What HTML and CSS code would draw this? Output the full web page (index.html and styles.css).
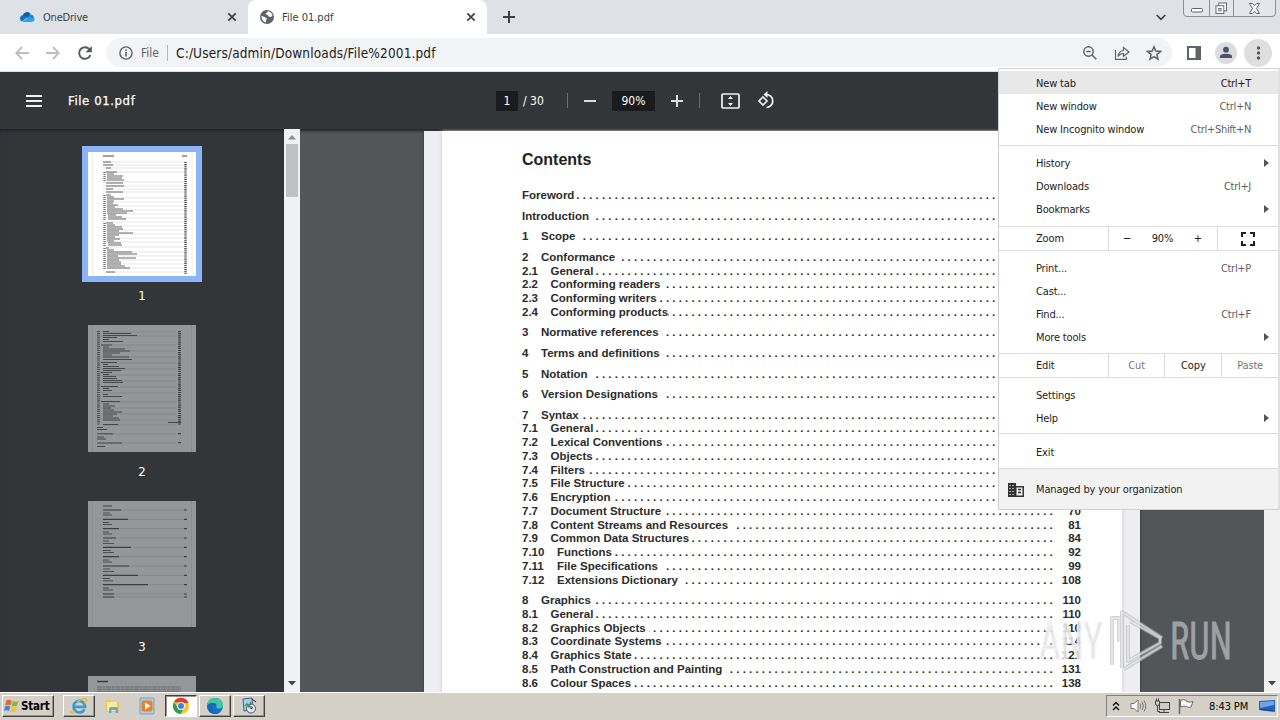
FILE: index.html
```html
<!DOCTYPE html>
<html lang="en">
<head>
<meta charset="utf-8">
<title>File 01.pdf</title>
<link rel="stylesheet" href="styles.css">
</head>
<body>
<div class="screen">
  <header class="tabs">
    <div class="tab tab-idle">
      <svg width="16" height="16" viewBox="0 0 16 16"><path d="M3.600 6.800A4.400 4.400 0 0 1 11.600 5l-3 4z" fill="#0a5cad"/><path d="M1 9.800A3.300 3.300 0 0 1 4 6.200q2 0 4.400 2L3 12.400Q1 12 1 9.800z" fill="#1173c7"/><path d="M8 8.500Q10 4.800 12.500 5.800A3.400 3.400 0 0 1 15 8.800l-3 1.500z" fill="#1583da"/><path d="M3 12.900L9.500 8.200 15.200 9q1.200 3.200-2 4H4.500z" fill="#2aa9ea"/></svg>
      <span class="tab-title">OneDrive</span>
      <svg class="x" width="10" height="10" viewBox="0 0 10 10"><path d="M1.300 1.300l7.400 7.400M8.700 1.300L1.300 8.700"/></svg>
    </div>
    <div class="tab tab-active">
      <svg width="16" height="16" viewBox="0 0 16 16"><circle cx="8" cy="8" r="7" fill="#5f6368"/><path d="M8.500 2.200Q13 3 13.500 6.500L12 8 9.500 7.500 9 6 7 5.500 6.800 4 8.500 3.500zM2.400 6.700L6 8.200 8 9.500 7 11v2.600Q2.600 12.500 2.400 6.700z" fill="#fff"/></svg>
      <span class="tab-title">File 01.pdf</span>
      <svg class="x" width="10" height="10" viewBox="0 0 10 10"><path d="M1.300 1.300l7.400 7.400M8.700 1.300L1.300 8.700"/></svg>
    </div>
    <svg class="plus" width="12" height="12" viewBox="0 0 12 12"><path d="M6 0v12M0 6h12" stroke="#3c4043" stroke-width="2"/></svg>
    <svg class="chev" width="10" height="7" viewBox="0 0 10 7"><path d="M.7 1L5 5.300 9.300 1" fill="none" stroke="#3c4043" stroke-width="1.700"/></svg>
    <div class="winbtns">
      <svg width="25" height="17" viewBox="0 0 25 17"><rect x="7.500" y="8.500" width="11" height="3.500" rx="1" fill="#fff" stroke="#5d626b"/></svg>
      <svg class="mid" width="25" height="17" viewBox="0 0 25 17"><rect x="9.500" y="2.500" width="8.500" height="8.500" fill="#fff" stroke="#5d626b"/><rect x="6.500" y="5.500" width="8.500" height="8.500" fill="#fff" stroke="#5d626b"/><rect x="9.500" y="8.500" width="2.500" height="2.500" fill="none" stroke="#5d626b"/></svg>
      <svg width="42" height="17" viewBox="0 0 42 17"><path d="M15.500 3.500h3l2 2.300 2-2.300h3l-3 5 3 5h-3l-2-2.300-2 2.300h-3l3-5z" fill="#fff" stroke="#5d626b"/></svg>
    </div>
  </header>

  <div class="toolbar">
    <svg class="nav" width="14" height="14" viewBox="0 0 14 14"><path d="M7 1L1.200 7 7 13M1.200 7H14" fill="none" stroke="#bcbec1" stroke-width="1.800"/></svg>
    <svg class="nav" width="14" height="14" viewBox="0 0 14 14"><path d="M7 1l5.800 6L7 13M12.800 7H0" fill="none" stroke="#bcbec1" stroke-width="1.800"/></svg>
    <svg class="nav" width="16" height="16" viewBox="0 0 16 16"><path d="M13.400 10A5.800 5.800 0 1 1 12.200 4" fill="none" stroke="#55585c" stroke-width="2"/><path d="M14.800 1v6.300H8.500z" fill="#55585c"/></svg>
    <div class="omni">
      <svg width="14" height="14" viewBox="0 0 14 14"><circle cx="7" cy="7" r="6.100" fill="none" stroke="#5f6368" stroke-width="1.400"/><path d="M7 6v4.500M7 3.200v1.600" stroke="#5f6368" stroke-width="1.600"/></svg>
      <span class="scheme">File</span><i class="bar"></i><span class="url">C:/Users/admin/Downloads/File%2001.pdf</span>
      <svg class="o1" width="16" height="16" viewBox="0 0 16 16"><circle cx="6.500" cy="6.500" r="4.700" fill="none" stroke="#5f6368" stroke-width="1.500"/><path d="M10 10l4.300 4.300M4.300 6.500h4.400" stroke="#5f6368" stroke-width="1.500"/></svg>
      <svg class="o2" width="16" height="16" viewBox="0 0 16 16"><path d="M1.500 5v9.300h10.800v-2.500M4 11.500Q5 5.500 9.500 5.500V2.500L15 7l-5.500 4.300V8.500Q6 8.500 4 11.500z" fill="none" stroke="#5f6368" stroke-width="1.200"/></svg>
      <svg class="o3" width="16" height="16" viewBox="0 0 16 16"><path d="M8 1.800l1.800 4.300 4.700.4-3.600 3.100 1.100 4.600L8 11.700l-4 2.500 1.100-4.600L1.500 6.500l4.700-.4z" fill="none" stroke="#5f6368" stroke-width="1.500"/></svg>
    </div>
    <svg class="panel" width="14" height="14" viewBox="0 0 14 14"><path d="M0 0h14v14H0zM2 2v10h6.500V2z" fill="#5f6368" fill-rule="evenodd"/></svg>
    <svg class="avatar" width="22" height="22" viewBox="0 0 22 22"><circle cx="11" cy="11" r="11" fill="#dadce0"/><circle cx="11" cy="7.700" r="2.900" fill="#47546d"/><path d="M5 16v-1.500Q5 11.700 11 11.700t6 2.800V16z" fill="#47546d"/></svg>
    <svg class="more" width="28" height="28" viewBox="0 0 28 28"><circle cx="14" cy="14" r="14" fill="#dfdfe0"/><g fill="#55585c"><circle cx="14.500" cy="9" r="1.700"/><circle cx="14.500" cy="14" r="1.700"/><circle cx="14.500" cy="19" r="1.700"/></g></svg>
  </div>

  <div class="pdfbar">
    <svg class="burger" width="16" height="12" viewBox="0 0 16 12"><path d="M0 1h16M0 6h16M0 11h16" stroke="#f1f1f1" stroke-width="2"/></svg>
    <span class="doc">File 01.pdf</span>
    <div class="pdfctl">
      <span class="box pg">1</span><span class="of">/ 30</span><i class="div d1"></i>
      <svg class="minus" width="12" height="12" viewBox="0 0 12 12"><path d="M0 6h12" stroke="#dcdddd" stroke-width="2"/></svg>
      <span class="box zm">90%</span>
      <svg class="add" width="12" height="12" viewBox="0 0 12 12"><path d="M0 6h12M6 0v12" stroke="#dcdddd" stroke-width="2"/></svg>
      <i class="div d2"></i>
      <svg class="fit" width="19" height="16" viewBox="0 0 19 16"><rect x="1" y="1" width="17" height="14" rx="1" fill="none" stroke="#f1f1f1" stroke-width="1.700"/><path d="M9.500 3l2.500 3H7zM9.500 13L7 10h5z" fill="#f1f1f1"/></svg>
      <svg class="rot" width="19" height="19" viewBox="0 0 19 19"><path d="M6 6l4 4-4 4-4-4z" fill="none" stroke="#f1f1f1" stroke-width="1.700"/><path d="M9 3.500A6.500 6.500 0 1 1 9.500 16.500" fill="none" stroke="#f1f1f1" stroke-width="1.700"/><path d="M10.500 0v7L6.500 3.500z" fill="#f1f1f1"/></svg>
    </div>
  </div>

  <main class="view">
    <aside class="thumbs">
      <div class="thumb sel">
        <svg width="108" height="124" viewBox="0 0 108 124"><rect width="108" height="124" fill="#fff"/><path d="M4.500 0v124M104 0v124" stroke="#f3ead2" stroke-width=".8"/>
          <path d="M15 4h11M94 4h5" stroke="#444" stroke-width="1.200"/>
          <path d="M15 10h84M15 13h84M15 16h84M15 20h84M15 30h84M15 34h84M15 37h84M15 40h84M15 46h84M15 50h84M15 54h84M15 58h84M15 62h84M15 66h84M15 70h84M15 74h84M15 78h84M15 82h84M15 86h84M15 90h84M15 95h84M15 100h84M15 104h84M15 108h84M15 112h84M15 116h84M15 120h84" stroke="#d3d3d3" stroke-width=".6"/>
          <path d="M15 10h8M15 13h10M18 16h5M18 20h11M19 22h7M19 24h16M19 26h15M19 28h17M18 31h17M18 34h18M18 37h7M18 40h17M18 43h5M19 45h7M19 47h17M19 49h7M19 51h6M19 53h11M19 55h8M19 57h16M19 59h26M19 61h20M20 63h8M20 65h14M20 67h18M18 71h7M19 73h8M19 75h15M19 77h16M19 79h12M19 81h26M19 83h12M19 85h8M19 87h13M19 89h7M20 91h13M20 93h14M18 96h3M19 98h7M19 100h25M19 102h30M19 104h11M19 106h29M19 108h12M19 110h14M19 112h14M19 114h18M19 116h23M18 120h9" stroke="#666" stroke-width="1"/>
          <path d="M97.500 10v112" stroke="#444" stroke-width="2.400" stroke-dasharray="1.100 1"/><path d="M16.500 20v9M16.500 43v26M16.500 71v23M16.500 96v22" stroke="#777" stroke-width="2.400" stroke-dasharray="1.100 .9"/></svg>
      </div>
      <span class="num">1</span>
      <div class="thumb dim t2">
        <svg width="108" height="127" viewBox="0 0 108 127"><rect width="108" height="127" fill="#94979a"/><path d="M4.500 0v127M103.500 0v127" stroke="#8a8d90" stroke-width="1"/>
          <path d="M14 7h74M14 11h74M14 20h74M14 26h74M14 32h74M14 38h74M14 44h74M14 50h74M14 56h74M14 62h74M14 68h74M14 77h74M14 83h74M14 89h74M14 95h74M14 100h74M14 109h74M14 118h74" stroke="#7f8285" stroke-width=".7"/>
          <path d="M15 6.500h6M15 8.500h28M15 10.500h34M15 12.500h14M15 14.500h6M15 16.500h20M13 20h11M15 22h6M15 24h22M15 26h27M15 28h17M15 30h9M15 32h26M15 34.500h29M13 37.500h16M15 39.500h5M15 41.500h16M15 43.500h22M15 45.500h18M13 47.500h11M15 49.500h6M15 51.500h13M15 53.500h14M15 55.500h19M15 57.500h20M13 61.500h17M15 63.500h6M15 65.500h9M15 69.500h5M15 71.500h19M13 76.500h19M15 79h6M15 81h12M15 83h8M15 85h11M15 87h19M15 89h14M15 91h10M15 93h16M15 95h17M80 97.500h13M15 99.500h15M9 102.500h6M9 104.500h10M9 108.800h16M9 112h7M9 114h9M9 118h25M9 121.500h8" stroke="#45484b" stroke-width="1"/>
          <path d="M91.500 6v94M91.500 108v2M91.500 117v2" stroke="#3f4245" stroke-width="3" stroke-dasharray="1.200 .9"/><path d="M10.500 6v94" stroke="#505356" stroke-width="3" stroke-dasharray="1.200 .9"/></svg>
      </div>
      <span class="num">2</span>
      <div class="thumb dim t3">
        <svg width="108" height="126" viewBox="0 0 108 126"><rect width="108" height="126" fill="#94979a"/><path d="M4.500 0v126M103.500 0v126" stroke="#8a8d90" stroke-width="1"/>
          <path d="M15 9h82M15 18.300h82M15 27.600h82M15 37h82M15 46.300h82M15 55.700h82M15 65h82M15 74.400h82M15 83.700h82M15 93h82M15 96h82" stroke="#7f8285" stroke-width=".7"/>
          <path d="M15 5h9M15 9h18M15 18.300h25M15 27.600h16M15 37h13M15 46.300h28M15 55.700h16M15 65h26M15 74.400h35M15 83.700h45M15 93h11M15 96h11M96 9h3M96 18.300h3M96 27.600h3M96 37h3M96 46.300h3M96 55.700h3M96 65h3M96 74.400h3M96 83.700h3M96 93h3M96 96h3" stroke="#3d4043" stroke-width="1.200"/>
          <path d="M15 12h7M15 14h9M15 21.500h6M15 23.500h9M15 31h6M15 33h9M15 40h6M15 42.500h11M15 49.500h8M15 51.500h11M15 59h6M15 61h9M15 68h7M15 70.500h11M15 77.500h7M15 79.800h10M15 87h6M15 89h10" stroke="#4c4f52" stroke-width="1"/></svg>
      </div>
      <span class="num">3</span>
      <div class="thumb dim t4">
        <svg width="108" height="127" viewBox="0 0 108 127"><rect width="108" height="127" fill="#94979a"/><path d="M9 5.500h11" stroke="#3a3d40" stroke-width="1.500"/><path d="M9 11h84M9 13.200h84M9 15.400h84" stroke="#66696c" stroke-width="1" stroke-dasharray="5 .6 3 .6"/></svg>
      </div>
    </aside>
    <div class="sb">
      <svg width="16" height="16" viewBox="0 0 16 16"><path d="M8 6l4 4.500H4z" fill="#8c8c8c"/></svg>
      <div class="sbthumb"></div>
      <svg width="16" height="16" viewBox="0 0 16 16"><path d="M4 5h8l-4 4.500z" fill="#444"/></svg>
    </div>

    <section class="viewer">
      <article class="page">
        <div class="paper">
        <h1>Contents</h1>
        <div class="toc">
<p class="g"><b>Foreword</b><i></i><u>vi</u></p>
<p class="g"><b>Introduction&nbsp;</b><i></i><u>vii</u></p>
<p class="g"><s>1</s><b>Scope&nbsp;</b><i></i><u>1</u></p>
<p class="g"><s>2</s><b>Conformance&nbsp;</b><i></i><u>1</u></p>
<p><s class="m">2.1</s><b>General</b><i></i><u>1</u></p>
<p><s class="m">2.2</s><b>Conforming readers&nbsp;</b><i></i><u>1</u></p>
<p><s class="m">2.3</s><b>Conforming writers</b><i></i><u>1</u></p>
<p><s class="m">2.4</s><b>Conforming products</b><i></i><u>2</u></p>
<p class="g"><s>3</s><b>Normative references&nbsp;</b><i></i><u>2</u></p>
<p class="g"><s>4</s><b>Terms and definitions&nbsp;</b><i></i><u>6</u></p>
<p class="g"><s>5</s><b>Notation&nbsp;&nbsp;</b><i></i><u>10</u></p>
<p class="g"><s>6</s><b>Version Designations&nbsp;&nbsp;</b><i></i><u>10</u></p>
<p class="g"><s>7</s><b>Syntax</b><i></i><u>11</u></p>
<p><s class="m">7.1</s><b>General</b><i></i><u>11</u></p>
<p><s class="m">7.2</s><b>Lexical Conventions</b><i></i><u>11</u></p>
<p><s class="m">7.3</s><b>Objects</b><i></i><u>13</u></p>
<p><s class="m">7.4</s><b>Filters&nbsp;</b><i></i><u>22</u></p>
<p><s class="m">7.5</s><b>File Structure</b><i></i><u>38</u></p>
<p><s class="m">7.6</s><b>Encryption</b><i></i><u>55</u></p>
<p><s class="m">7.7</s><b>Document Structure&nbsp;</b><i></i><u>70</u></p>
<p><s class="m">7.8</s><b>Content Streams and Resources&nbsp;&nbsp;</b><i></i><u>81</u></p>
<p><s class="m">7.9</s><b>Common Data Structures</b><i></i><u>84</u></p>
<p><s class="l">7.10</s><b>Functions</b><i></i><u>92</u></p>
<p><s class="l">7.11</s><b>File Specifications&nbsp;&nbsp;</b><i></i><u>99</u></p>
<p><s class="l">7.12</s><b>Extensions Dictionary&nbsp;&nbsp;</b><i></i><u>108</u></p>
<p class="g"><s>8</s><b>Graphics&nbsp;</b><i></i><u>110</u></p>
<p><s class="m">8.1</s><b>General</b><i></i><u>110</u></p>
<p><s class="m">8.2</s><b>Graphics Objects&nbsp;</b><i></i><u>110</u></p>
<p><s class="m">8.3</s><b>Coordinate Systems</b><i></i><u>114</u></p>
<p><s class="m">8.4</s><b>Graphics State</b><i></i><u>121</u></p>
<p><s class="m">8.5</s><b>Path Construction and Painting&nbsp;</b><i></i><u>131</u></p>
<p><s class="m">8.6</s><b>Colour Spaces</b><i></i><u>138</u></p>
        </div>
        </div>
      </article>
    </section>
    <div class="sb right"><svg width="16" height="16" viewBox="0 0 16 16"><path d="M4 5h8l-4 4.500z" fill="#444"/></svg></div>
  </main>

  <footer class="task">
    <div class="tb start"><svg width="16" height="16" viewBox="0 0 16 16"><path d="M2.500 2.500Q5 1 7.500 2.500L6.500 7.300Q4 6 1.300 7.500z" fill="#e8642c"/><path d="M8.500 3Q11.500 4.500 14.500 2.800L13.300 7.500Q10.500 9 7.500 7.700z" fill="#8cb83a"/><path d="M1 8.500Q3.500 7 6.200 8.400L5 13Q2.500 11.500 0 13z" fill="#3f86cc"/><path d="M7.300 8.900Q10 10 13 8.700L11.800 13Q9 14.800 6.200 13.500z" fill="#f4c22b"/></svg>Start</div>
    <div class="tb app a1"><svg width="18" height="18" viewBox="0 0 18 18"><path d="M14.500 12.300A5.800 5.800 0 1 1 15 8.500v1.300H4" fill="none" stroke="#3a9ad9" stroke-width="2.700"/><path d="M1 14Q-.5 17 5 14.500M7 5Q16-1 16.500 2.500 16.500 4 14.500 6" fill="none" stroke="#e6b93a" stroke-width="1.500"/></svg></div>
    <div class="app flat"><svg width="18" height="18" viewBox="0 0 18 18"><path d="M2 3h5l1 2h7v10H2z" fill="#e9c65c"/><path d="M3 5h10v9H3z" fill="#fae9a4"/><path d="M5 16v-4q0-2 2-2h5q2 0 2 2v4h-2.500v-3h-4v3z" fill="#65aeca"/></svg></div>
    <div class="app flat"><svg width="18" height="18" viewBox="0 0 18 18"><rect x="2" y="1" width="14" height="16" rx="1" fill="#a9cdea" stroke="#6ea4cf"/><rect x="3.500" y="3.500" width="11" height="11" rx="2" fill="#f08023"/><path d="M7 5.500v7L12.500 9z" fill="#fff"/></svg></div>
    <div class="tb app on"><svg width="18" height="18" viewBox="0 0 18 18"><circle cx="9" cy="9" r="8" fill="#f8c51c"/><path d="M2 5A8 8 0 0 1 16.500 6H9z" fill="#e33b2e"/><path d="M2 5A8 8 0 0 0 8.500 17L12 11H6z" fill="#2da04e"/><circle cx="9" cy="9" r="3.900" fill="#fff"/><circle cx="9" cy="9" r="3" fill="#3b7fe8"/></svg></div>
    <div class="tb app"><svg width="18" height="18" viewBox="0 0 18 18"><circle cx="9" cy="9" r="8" fill="#1473c4"/><path d="M1.200 8Q2 1 9 1t8 7q0 3.500-4 3.500-3 0-2.500-1.500Q11 6 6.500 6 3 6 1.200 8z" fill="#42c8a0"/><path d="M6.500 8Q4 12 8 15q3 2 6.500 0Q12 17 9 17 1 16 1.200 9 3 6 7.500 6 10 6 10.800 8z" fill="#1b66b4"/></svg></div>
    <div class="tb app"><svg width="18" height="18" viewBox="0 0 18 18"><path d="M3 2l9-1 1 12-9 1z" fill="#9ed2ee" stroke="#558"/><circle cx="11" cy="11.500" r="4.500" fill="#dce8f5" stroke="#46507a"/><path d="M5 9l2-2 2 3 2-5" fill="none" stroke="#3a9d48" stroke-width="1.500"/><path d="M11 9v3l2-1.500M12 2l4 3" fill="none" stroke="#223"/></svg></div>
    <div class="tray">
      <svg width="8" height="10" viewBox="0 0 8 10"><path d="M1 4.500L4 1.500l3 3M1 9l3-3 3 3" fill="none" stroke="#111" stroke-width="1.500"/></svg>
      <svg class="s2" width="17" height="16" viewBox="0 0 17 16"><path d="M1 5.500h3L8 2v12L4 10.500H1z" fill="#fff" stroke="#777"/><path d="M10 5.500q1.800 2.500 0 5M12 4q3 4 0 8M14 2.500q3.500 5.500 0 11" fill="none" stroke="#777"/></svg>
      <svg class="s3" width="16" height="16" viewBox="0 0 16 16"><rect x="5.500" y="4.500" width="10" height="7" fill="#ccc" stroke="#444"/><path d="M5 14.500h10M10 12v2" stroke="#444"/><path d="M1.500 3h4v3q0 1.500-2 1.500t-2-1.500zM2.500 3V.5M4.500 3V.5M3.500 7.500v6H6" fill="none" stroke="#444"/></svg>
      <svg class="s4" width="17" height="16" viewBox="0 0 17 16"><path d="M1.500 1v15" stroke="#666" stroke-width="1.500"/><path d="M2.500 2.500q3-2 6 0v1q3 1.500 6.500 0L13 9q-2.500 1-4.500-.5-3-1-6 .5z" fill="#fff" stroke="#666"/></svg>
      <time>8:43 PM</time>
      <svg class="s5" width="16" height="12" viewBox="0 0 16 12"><path d="M0 1l16-1v12L0 10z" fill="#2264bd"/><path d="M1 2l14-1v4L1 8z" fill="#6da6e8"/><path d="M2 9.500l12 1" stroke="#153f80"/></svg>
    </div>
  </footer>

  <nav class="menu">
    <div class="grp first">
      <div class="mi hot"><span>New tab</span><kbd>Ctrl+T</kbd></div>
      <div class="mi"><span>New window</span><kbd>Ctrl+N</kbd></div>
      <div class="mi"><span>New Incognito window</span><kbd>Ctrl+Shift+N</kbd></div>
    </div>
    <div class="grp hist">
      <div class="mi"><span>History</span><em></em></div>
      <div class="mi"><span>Downloads</span><kbd>Ctrl+J</kbd></div>
      <div class="mi"><span>Bookmarks</span><em></em></div>
    </div>
    <div class="split zoom"><span class="lab">Zoom</span><div class="cell zc"><span>−</span><span class="pct">90%</span><span>+</span></div><div class="cell fs"><svg width="14" height="14" viewBox="0 0 14 14"><path d="M1 5V1h4M9 1h4v4M13 9v4H9M5 13H1V9" fill="none" stroke="#222" stroke-width="2"/></svg></div></div>
    <div class="grp print">
      <div class="mi"><span>Print...</span><kbd>Ctrl+P</kbd></div>
      <div class="mi"><span>Cast...</span></div>
      <div class="mi"><span>Find...</span><kbd>Ctrl+F</kbd></div>
      <div class="mi"><span>More tools</span><em></em></div>
    </div>
    <div class="split"><span class="lab">Edit</span><div class="cell ed off">Cut</div><div class="cell ed">Copy</div><div class="cell ed off">Paste</div></div>
    <div class="grp set">
      <div class="mi"><span>Settings</span></div>
      <div class="mi"><span>Help</span><em></em></div>
    </div>
    <div class="grp exit"><div class="mi"><span>Exit</span></div></div>
    <div class="managed"><svg width="16" height="14" viewBox="0 0 16 14"><path d="M0 0h8v3h8v11H0z" fill="#333"/><path d="M1.500 2.500h5M1.500 5.500h5M1.500 8.500h5M1.500 11.500h5" stroke="#f2f2f2" stroke-width="1.200" stroke-dasharray="1.200 1.700"/><path d="M8.500 4.500h6v8h-6z" fill="#f2f2f2"/><path d="M10 6.500h3M10 9.500h3" stroke="#333" stroke-width="1.500"/></svg><span>Managed by your organization</span></div>
  </nav>

  <svg class="mark" width="204" height="66" viewBox="0 0 204 66">
    <g font-family="Roboto, sans-serif" font-size="51" font-weight="400" opacity=".9"><text x="1" y="51" textLength="64" lengthAdjust="spacingAndGlyphs" fill="#e3e3e5" stroke="#f4f4f5" stroke-width="1.200">ANY</text><text x="132" y="51" textLength="62" lengthAdjust="spacingAndGlyphs" fill="#a7a9ab" stroke="#a7a9ab" stroke-width=".8">RUN</text></g>
    <path d="M74 57V10h7v24M84 60V4l40 26M90 17v36l32-18v-5L92 13M86 61l38-23" fill="none" stroke="#b4b6b9" stroke-width="4" stroke-linejoin="round" opacity=".6"/>
    <path d="M74 57V10h7v24M84 60V4l40 26M90 17v36l32-18v-5L92 13M86 61l38-23" fill="none" stroke="#f2f2f4" stroke-width="2" stroke-linejoin="round" opacity=".6"/>
  </svg>
</div>
</body>
</html>
```

FILE: styles.css
```css
* { box-sizing: border-box; }
body { margin: 0; overflow: hidden; font-family: "DejaVu Sans Condensed", "DejaVu Sans", sans-serif; font-stretch: condensed; font-size: 11px; color: #222; }
svg { display: block; flex: none; }
.screen { position: relative; width: 1280px; height: 720px; display: flex; flex-direction: column; overflow: hidden; }

.tabs { height: 34px; background: #dee1e6; display: flex; align-items: flex-start; flex: none; }
.tab { height: 34px; display: flex; align-items: center; }
.tab-idle { width: 248px; padding: 0 11px 0 19px; }
.tab-active { width: 239px; padding: 0 11px; background: #fff; border-radius: 8px 8px 0 0; }
.tab-title { flex: 1; margin-left: 8px; color: #3c4043; letter-spacing: -.2px; }
.tab-active .tab-title { margin-left: 7px; letter-spacing: 0; }
.x path { stroke: #3c4043; stroke-width: 1.7; }
.plus { margin: 11px 0 0 16px; }
.chev { margin: 14px 17px 0 auto; }
.winbtns { display: flex; margin: -1px 4px 0 0; height: 18px; border: 1px solid #8a8f98; border-radius: 0 0 4px 4px; background: #e3e6eb; width: 93px; }
.winbtns .mid { border-left: 1px solid #8a8f98; border-right: 1px solid #8a8f98; }

.toolbar { height: 38px; flex: none; background: #fff; border-bottom: 1px solid #dcdee0; display: flex; align-items: center; padding-left: 15px; }
.nav { margin-right: 17px; }
.nav + .nav + .nav { margin-right: 13px; }
.omni { width: 1066px; height: 29px; border-radius: 15px; background: #f1f3f4; display: flex; align-items: center; padding-left: 13px; flex: none; }
.scheme { font-size: 12px; color: #5f6368; margin-left: 8px; width: 26px; }
.bar { width: 1px; height: 16px; background: #b5b8bc; }
.url { font-size: 13.5px; margin-left: 8px; white-space: nowrap; flex: 1; letter-spacing: .15px; }
.o2 { margin-left: 16px; }
.o3 { margin: 0 10px 0 16px; }
.panel { margin-left: 15px; }
.avatar { margin-left: 14px; }
.more { margin-left: 7px; }

.pdfbar { height: 57px; flex: none; background: #323639; display: flex; align-items: center; padding-left: 26px; color: #fff; }
.doc { margin-left: 26px; width: 428px; font-size: 13px; letter-spacing: .6px; -webkit-text-stroke: .25px #fff; }
.pdfctl { display: flex; align-items: center; }
.box { background: #191b1c; height: 20px; line-height: 20px; text-align: center; font-size: 12px; }
.pg { width: 22px; margin-left: 0; }
.of { margin-left: 5px; width: 26px; font-size: 12px; white-space: nowrap; }
.div { width: 1px; height: 15px; background: #6b6e71; }
.d1 { margin-left: 18px; }
.minus { margin-left: 16px; }
.zm { width: 43px; margin-left: 16px; }
.add { margin-left: 16px; }
.d2 { margin-left: 16px; }
.fit { margin-left: 21px; }
.rot { margin-left: 17px; }

.view { flex: 1; min-height: 0; display: flex; background: #525659; box-shadow: inset 0 3px 3px -1px #222; }
.thumbs { width: 284px; background: #323639; display: flex; flex-direction: column; align-items: center; padding-top: 17px; overflow: hidden; box-shadow: inset 0 3px 3px -1px #1f2224; }
.thumb { flex: none; }
.sel { border: 6px solid #8ab4f8; }
.num { flex: none; height: 43px; line-height: 28px; color: #fff; font-size: 13px; }
.num + .t3 { margin-top: 6px; }
.num + .t4 { margin-top: 6px; }
.t2 + .num, .t3 + .num { line-height: 40px; }
.sb { width: 16px; background: #f1f1f1; display: flex; flex-direction: column; flex: none; }
.sbthumb { height: 53px; margin: -1px 2px auto; background: #c1c1c1; }
.right { justify-content: flex-end; }
.viewer { flex: 1; display: flex; padding: 2px 0 0 124px; overflow: hidden; }
.page { width: 716px; background: #ededf2; padding: 0 18px; box-shadow: 0 0 3px #333; }
.paper { background: #fff; width: 680px; height: 562px; padding: 20px 41px 0 80px; box-shadow: 0 0 4px #c8c8d0; font-family: "Liberation Sans", Arial, sans-serif; }
h1 { margin: 0; font-size: 16px; line-height: 18px; color: #222; }
.toc { padding-top: 13.3px; font-size: 11.5px; font-weight: 700; color: #2c2c2c; }
.toc p { display: flex; margin: 0; height: 13.74px; line-height: 13.74px; white-space: nowrap; }
.toc p.g { margin-top: 6.85px; }
.toc s { text-decoration: none; width: 19px; flex: none; }
.toc s.m { width: 28.5px; }
.toc s.l { width: 35px; }
.toc u { text-decoration: none; width: 28px; text-align: right; flex: none; }
.toc i { flex: 1; min-width: 0; overflow: hidden; display: flex; justify-content: flex-end; font-style: normal; }
.toc i::before { content: "..........................................................................................."; letter-spacing: 3.2px; flex: none; margin-right: -3px; }

.task { height: 28px; flex: none; background: #d4d0c8; border-top: 1px solid #fff; display: flex; padding-top: 2px; position: relative; }
.tb { border: 1px solid; border-color: #fff #404040 #404040 #fff; box-shadow: inset -1px -1px #9a968e; }
.start { width: 52px; height: 22px; margin-left: 2px; display: flex; align-items: center; padding-left: 1px; gap: 1px; font-weight: 700; font-size: 11.5px; letter-spacing: -.2px; color: #000; }
.app { width: 32px; height: 22px; margin-right: 2px; display: flex; justify-content: center; align-items: center; }
.a1 { margin-left: 9px; }
.on { background: #fff; border-color: #404040 #fff #fff #404040; box-shadow: inset 1px 1px #9a968e; }
.tray { margin-left: auto; margin-right: 2px; width: 172px; height: 22px; border: 1px solid; border-color: #808080 #fff #fff #808080; display: flex; align-items: center; padding-left: 5px; color: #000; }
.s2 { margin-left: 10px; }
.s3 { margin-left: 7px; }
.s4 { margin-left: 8px; }
.tray time { margin-left: 14px; width: 42px; white-space: nowrap; letter-spacing: -.1px; }
.s5 { margin-left: 8px; }

.menu { position: absolute; left: 998px; top: 68px; width: 282px; height: 442px; background: #fff; border: 1px solid #d0d0d0; border-right: 2px solid #e0e0e0; padding-top: 2px; overflow: hidden; letter-spacing: -.16px; }
.grp { border-bottom: 1px solid #dcdcdc; }
.first { padding-bottom: 5px; }
.hist { padding: 5px 0 6px; }
.print { padding: 5px 0 5px; }
.set { padding: 5px 0 4px; }
.exit { padding: 6px 0 5px; }
.mi { height: 23px; display: flex; align-items: center; padding: 1px 27px 0 37px; }
.mi.hot { background: #e8e8e8; }
.mi kbd { font: inherit; color: #5f5f5f; margin-left: auto; letter-spacing: -.3px; }
.mi.hot kbd { color: #222; }
.mi em { margin-left: auto; margin-right: -18px; border: 4px solid transparent; border-left: 5px solid #555; border-right: 0; }
.split { display: flex; height: 24px; border-bottom: 1px solid #dcdcdc; align-items: center; }
.lab { width: 109px; padding-left: 37px; }
.cell { height: 23px; border-left: 1px solid #dcdcdc; display: flex; align-items: center; justify-content: center; }
.zc { width: 109px; justify-content: space-between; padding: 0 15px 0 14px; }
.fs { flex: 1; }
.ed { width: 57px; }
.off { color: #767676; }
.managed { height: 41px; background: #f2f2f2; display: flex; align-items: center; padding-left: 9px; gap: 12px; }

.mark { position: absolute; left: 1038px; top: 608px; }
```
